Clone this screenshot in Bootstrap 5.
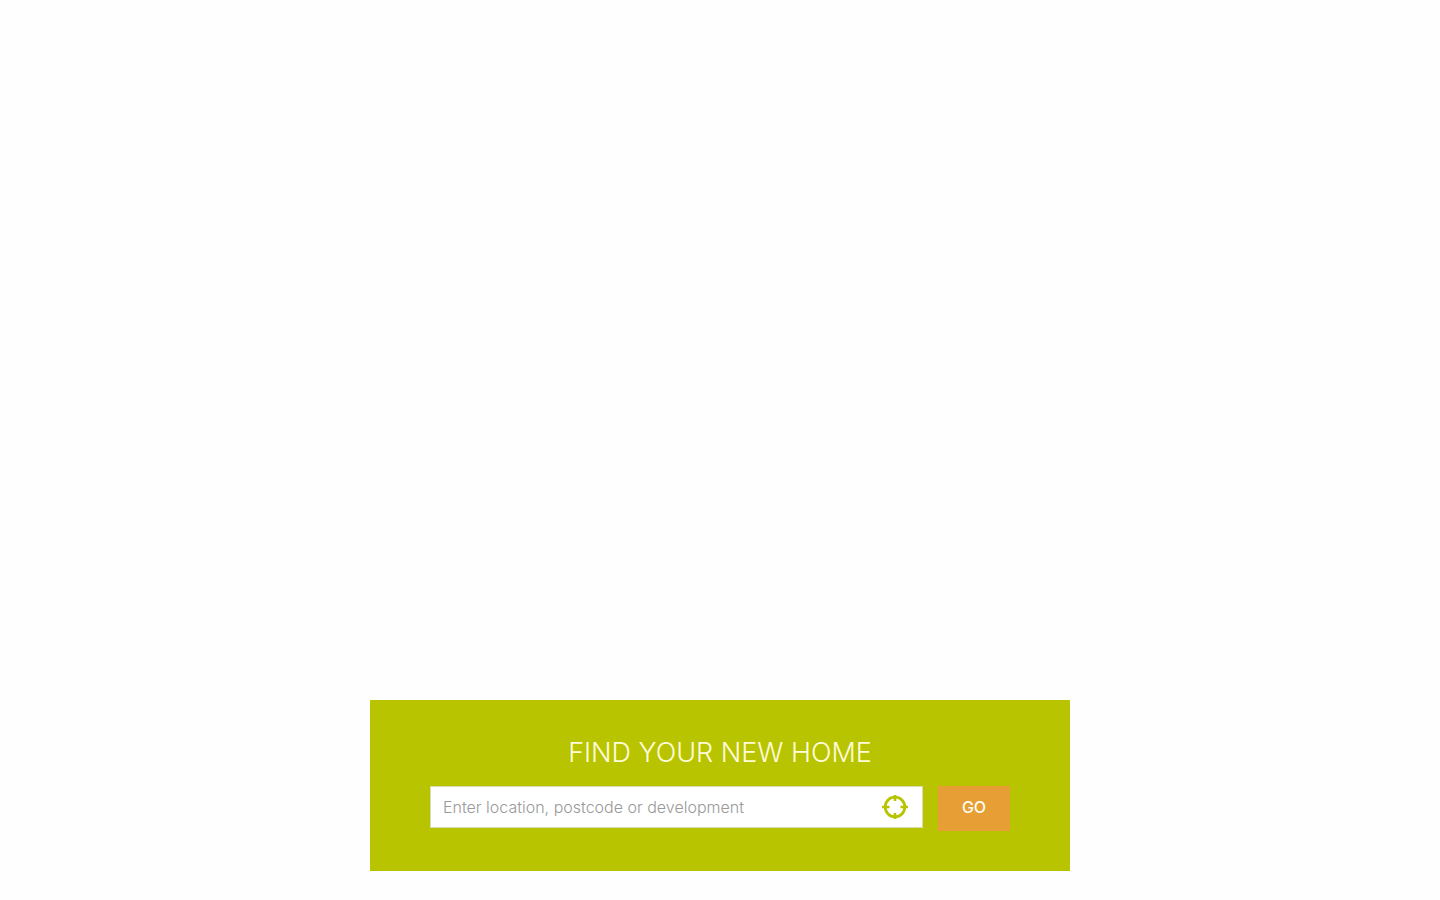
<!DOCTYPE html>
<html lang="en">
<head>
<meta charset="utf-8">
<meta name="viewport" content="width=device-width, initial-scale=1">
<title>Find your new home</title>
<link href="https://cdn.jsdelivr.net/npm/bootstrap@5.3.0/dist/css/bootstrap.min.css" rel="stylesheet">
<style>
  body { font-family: Inter, "Open Sans", sans-serif; background: #fefefe; }
  main { padding-bottom: 29px; }
  .search-panel { max-width: 700px; padding: 37px 60px 40px; background: #b8c400; }
  .search-title { font-size: 27px; line-height: 32px; font-weight: 300; color: #fffcdc; margin-bottom: 17px; }
  .search-row { gap: 15px; }
  .search-input { height: 42px; padding: 0 52px 0 12px; border: 1px solid #d9dcb0; font-size: 16px; font-weight: 300; color: #555; }
  .search-input::placeholder { color: #999; }
  .locate-btn { right: 14px; color: #b8c400; }
  .go-btn { width: 72px; height: 45px; padding: 0 0 3px; background: #e69e35; color: #fffdf0; font-size: 16px; font-weight: 500; }
  .go-btn:hover { background: #d98f25; color: #fff; }
</style>
</head>
<body>
<main class="min-vh-100 d-flex flex-column justify-content-end">
  <section class="search-panel w-100 mx-auto">
    <h1 class="search-title text-center text-uppercase">Find your new home</h1>
    <form class="search-row d-flex align-items-start">
      <div class="position-relative flex-grow-1">
        <input type="text" id="location" class="search-input form-control rounded-0" placeholder="Enter location, postcode or development" aria-label="Enter location, postcode or development">
        <button type="button" class="locate-btn btn p-0 border-0 d-flex position-absolute top-50 translate-middle-y" aria-label="Use my location">
          <svg width="28" height="28" viewBox="0 0 28 28" fill="none" stroke="currentColor" aria-hidden="true">
            <circle cx="14" cy="14" r="9.8" stroke-width="2.8"/>
            <path d="M14 2v6M14 20v6M1 14h7.500M19.500 14h7.500" stroke-width="2.600"/>
          </svg>
        </button>
      </div>
      <button type="submit" class="go-btn btn rounded-0 border-0">GO</button>
    </form>
  </section>
</main>
<script src="https://cdn.jsdelivr.net/npm/bootstrap@5.3.0/dist/js/bootstrap.bundle.min.js"></script>
</body>
</html>
